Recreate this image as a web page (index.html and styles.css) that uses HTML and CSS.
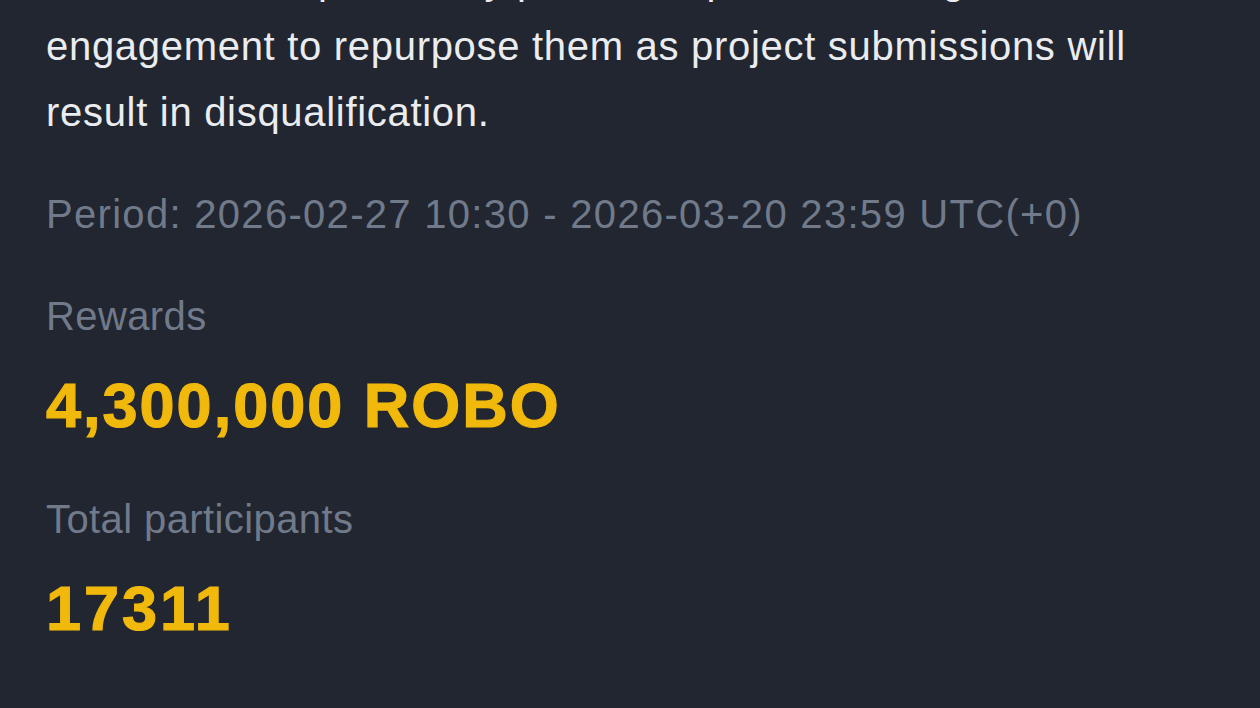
FILE: index.html
```html
<!DOCTYPE html>
<html lang="en">
<head>
<meta charset="utf-8">
<title>Campaign details</title>
<link rel="stylesheet" href="styles.css">
</head>
<body>
<main class="details">
  <p class="rules">Contents from previously published posts or using engagement to repurpose them as project submissions will result in disqualification.</p>
  <p class="period">Period: 2026-02-27 10:30 - 2026-03-20 23:59 UTC(+0)</p>
  <section class="stat">
    <div class="stat-label">Rewards</div>
    <div class="stat-value">4,300,000 ROBO</div>
  </section>
  <section class="stat">
    <div class="stat-label">Total participants</div>
    <div class="stat-value stat-value-count">17311</div>
  </section>
</main>
</body>
</html>
```

FILE: styles.css
```css
html, body {
  margin: 0;
  padding: 0;
  background: #212630;
  height: 100%;
  overflow: hidden;
}

.details {
  padding: 0 100px 0 46px;
  font-family: "Liberation Sans", Arial, sans-serif;
}

.rules {
  margin: -53px 0 0 0;
  font-size: 40px;
  line-height: 66px;
  letter-spacing: 0.7px;
  color: #eaecef;
}

.period {
  margin: 45px 0 0 0;
  font-size: 40px;
  line-height: 48px;
  letter-spacing: 1.3px;
  color: #707a8a;
}

.stat {
  margin-top: 54px;
}

.stat-label {
  font-size: 40px;
  line-height: 48px;
  letter-spacing: 0.4px;
  color: #707a8a;
}

.stat-value {
  margin-top: 29px;
  font-size: 63px;
  line-height: 72px;
  font-weight: 700;
  letter-spacing: 2px;
  color: #f0b90b;
  -webkit-text-stroke: 1.2px #f0b90b;
}

.stat-value-count {
  letter-spacing: 3px;
}
```
